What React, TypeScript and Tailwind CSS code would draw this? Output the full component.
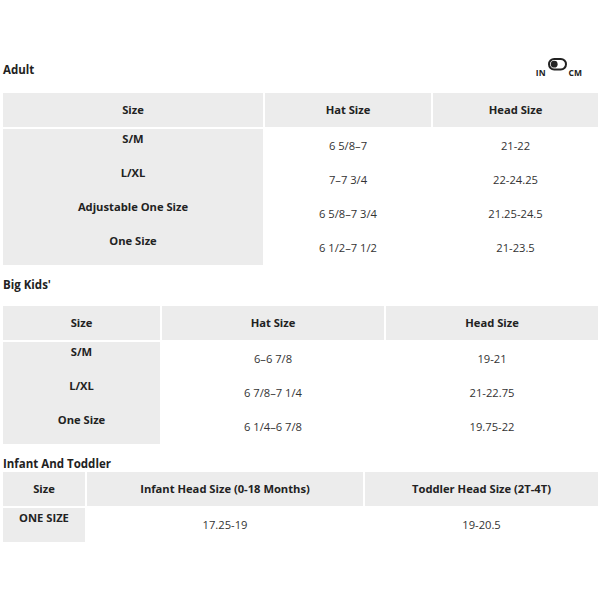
import React from "react";

type Table = {
  cols: number[];
  headers: string[];
  rows: string[][];
};

const F = { fontFamily: '"Open Sans", "Liberation Sans", sans-serif' };

function SizeTable({ t }: { t: Table }) {
  const tpl = t.cols.map((c) => `${c}px`).join(" ");
  return (
    <div>
      <div className="grid gap-x-[2px]" style={{ gridTemplateColumns: tpl }}>
        {t.headers.map((h, i) => (
          <div
            key={i}
            className="h-[34px] bg-[#ececec] flex items-center justify-center text-[11.2px] font-bold text-[#222]"
          >
            {h}
          </div>
        ))}
      </div>
      <div className="grid gap-x-[2px] mt-[2px]" style={{ gridTemplateColumns: tpl }}>
        <div className="bg-[#ececec] flex flex-col">
          {t.rows.map((r, i) => (
            <div
              key={i}
              className="h-[34px] text-center pt-[1px] leading-[17px] text-[11.2px] font-bold text-[#222]"
            >
              {r[0]}
            </div>
          ))}
        </div>
        {t.headers.slice(1).map((_, ci) => (
          <div key={ci} className="flex flex-col">
            {t.rows.map((r, i) => (
              <div
                key={i}
                className="h-[34px] flex items-center justify-center text-[11.2px] text-[#333]"
              >
                {r[ci + 1]}
              </div>
            ))}
          </div>
        ))}
      </div>
    </div>
  );
}

const adult: Table = {
  cols: [260, 166, 165],
  headers: ["Size", "Hat Size", "Head Size"],
  rows: [
    ["S/M", "6 5/8–7", "21-22"],
    ["L/XL", "7–7 3/4", "22-24.25"],
    ["Adjustable One Size", "6 5/8–7 3/4", "21.25-24.5"],
    ["One Size", "6 1/2–7 1/2", "21-23.5"],
  ],
};

const kids: Table = {
  cols: [157, 222, 212],
  headers: ["Size", "Hat Size", "Head Size"],
  rows: [
    ["S/M", "6–6 7/8", "19-21"],
    ["L/XL", "6 7/8–7 1/4", "21-22.75"],
    ["One Size", "6 1/4–6 7/8", "19.75-22"],
  ],
};

const infant: Table = {
  cols: [82, 276, 233],
  headers: ["Size", "Infant Head Size (0-18 Months)", "Toddler Head Size (2T-4T)"],
  rows: [["ONE SIZE", "17.25-19", "19-20.5"]],
};

export default function App() {
  return (
    <div className="w-[600px] h-[600px] bg-white pl-[3px] pr-[2px] pt-[61px]" style={F}>
      <div className="flex items-start justify-between h-[32px]">
        <div className="text-[11.5px] font-bold text-[#222] leading-[17px]">Adult</div>
        <div className="flex items-start pr-[16px] mt-[-3px]">
          <span className="text-[8.5px] font-bold text-[#222] mt-[9px]">IN</span>
          <svg width="19" height="13" viewBox="0 0 19 13" className="mx-[2px]">
            <rect x="1" y="1" width="17" height="10.5" rx="5.2" fill="none" stroke="#222" strokeWidth="2" />
            <circle cx="6.2" cy="6.2" r="3.4" fill="#222" />
          </svg>
          <span className="text-[8.5px] font-bold text-[#222] mt-[9px]">CM</span>
        </div>
      </div>
      <SizeTable t={adult} />
      <div className="text-[11.5px] font-bold text-[#222] leading-[17px] mt-[11px] mb-[13px]">Big Kids'</div>
      <SizeTable t={kids} />
      <div className="text-[11.5px] font-bold text-[#222] leading-[17px] mt-[11px] mb-[0px]">Infant And Toddler</div>
      <SizeTable t={infant} />
    </div>
  );
}
